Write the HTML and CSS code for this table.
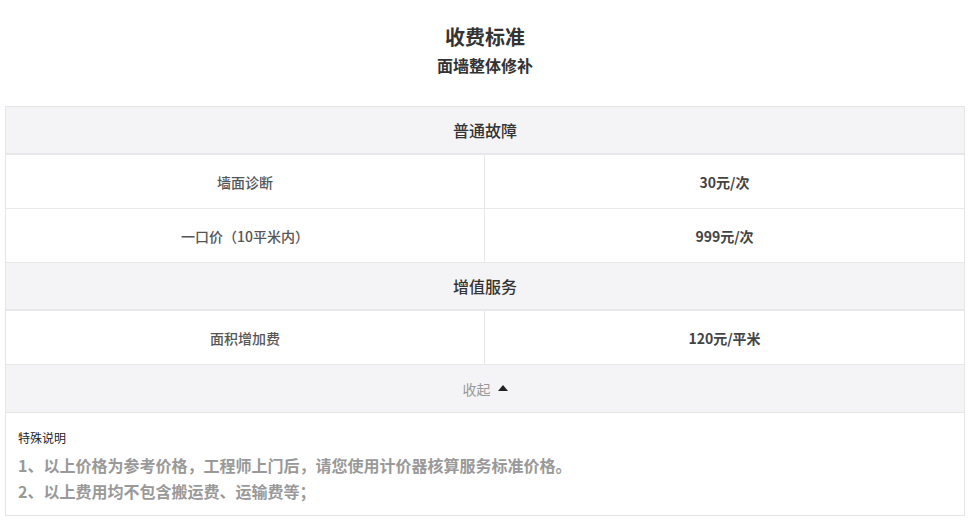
FILE: index.html
```html
<!DOCTYPE html>
<html lang="zh">
<head>
<meta charset="utf-8">
<title>收费标准</title>
<link rel="stylesheet" href="styles.css">
</head>
<body>
<div class="page">
  <header class="intro">
    <h1 class="title">收费标准</h1>
    <h2 class="subtitle">面墙整体修补</h2>
  </header>
  <section class="table">
    <div class="sec-head">普通故障</div>
    <div class="row">
      <div class="cell name">墙面诊断</div>
      <div class="cell price">30元/次</div>
    </div>
    <div class="row">
      <div class="cell name">一口价（10平米内）</div>
      <div class="cell price">999元/次</div>
    </div>
    <div class="sec-head">增值服务</div>
    <div class="row">
      <div class="cell name">面积增加费</div>
      <div class="cell price">120元/平米</div>
    </div>
    <div class="collapse">
      <span class="collapse-text">收起</span>
      <span class="tri"></span>
    </div>
    <div class="notes">
      <p class="notes-title">特殊说明</p>
      <p class="note">1、以上价格为参考价格，工程师上门后，请您使用计价器核算服务标准价格。</p>
      <p class="note">2、以上费用均不包含搬运费、运输费等；</p>
    </div>
  </section>
</div>
</body>
</html>
```
FILE: styles.css
```css
* { box-sizing: border-box; }
html, body {
  margin: 0;
  padding: 0;
  background: #fff;
}
body {
  font-family: "Microsoft YaHei", "Noto Sans CJK SC", "Noto Sans", sans-serif;
  color: #333;
}
.page {
  width: 960px;
  margin: 0 5px;
}
.intro {
  display: flex;
  flex-direction: column;
  align-items: center;
  padding: 24px 0 28px;
  height: 106px;
}
.title {
  margin: 0;
  font-size: 20px;
  line-height: 26px;
  font-weight: 700;
  color: #333;
}
.subtitle {
  margin: 4px 0 0;
  font-size: 16px;
  line-height: 22px;
  font-weight: 700;
  color: #333;
}
.table {
  border: 1px solid #e6e6e6;
  display: flex;
  flex-direction: column;
}
.sec-head {
  height: 48px;
  background: #f4f4f6;
  border-bottom: 2px solid #e8e8ea;
  display: flex;
  align-items: center;
  justify-content: center;
  font-size: 16px;
  font-weight: 500;
  color: #333;
}
.row {
  display: grid;
  grid-template-columns: 479px 1fr;
  height: 54px;
  border-bottom: 1px solid #e8e8e8;
}
.cell {
  display: flex;
  align-items: center;
  justify-content: center;
  font-size: 14px;
}
.name {
  border-right: 1px solid #e8e8e8;
  color: #555;
  font-weight: 500;
}
.price {
  color: #444;
  font-weight: 700;
  font-size: 14px;
}
.collapse {
  height: 48px;
  background: #f4f4f6;
  border-bottom: 1px solid #e6e6e6;
  display: flex;
  align-items: center;
  justify-content: center;
  gap: 7px;
}
.collapse-text {
  font-size: 14px;
  color: #999;
}
.tri {
  width: 0;
  height: 0;
  border-left: 5px solid transparent;
  border-right: 5px solid transparent;
  border-bottom: 6px solid #222;
  margin-top: -2px;
}
.notes {
  height: 102px;
  padding: 15px 12px 0;
}
.notes-title {
  margin: 0 0 4px;
  font-size: 12px;
  line-height: 20px;
  color: #222;
}
.note {
  margin: 0;
  font-size: 16px;
  line-height: 26px;
  font-weight: 700;
  color: #999;
}
```
